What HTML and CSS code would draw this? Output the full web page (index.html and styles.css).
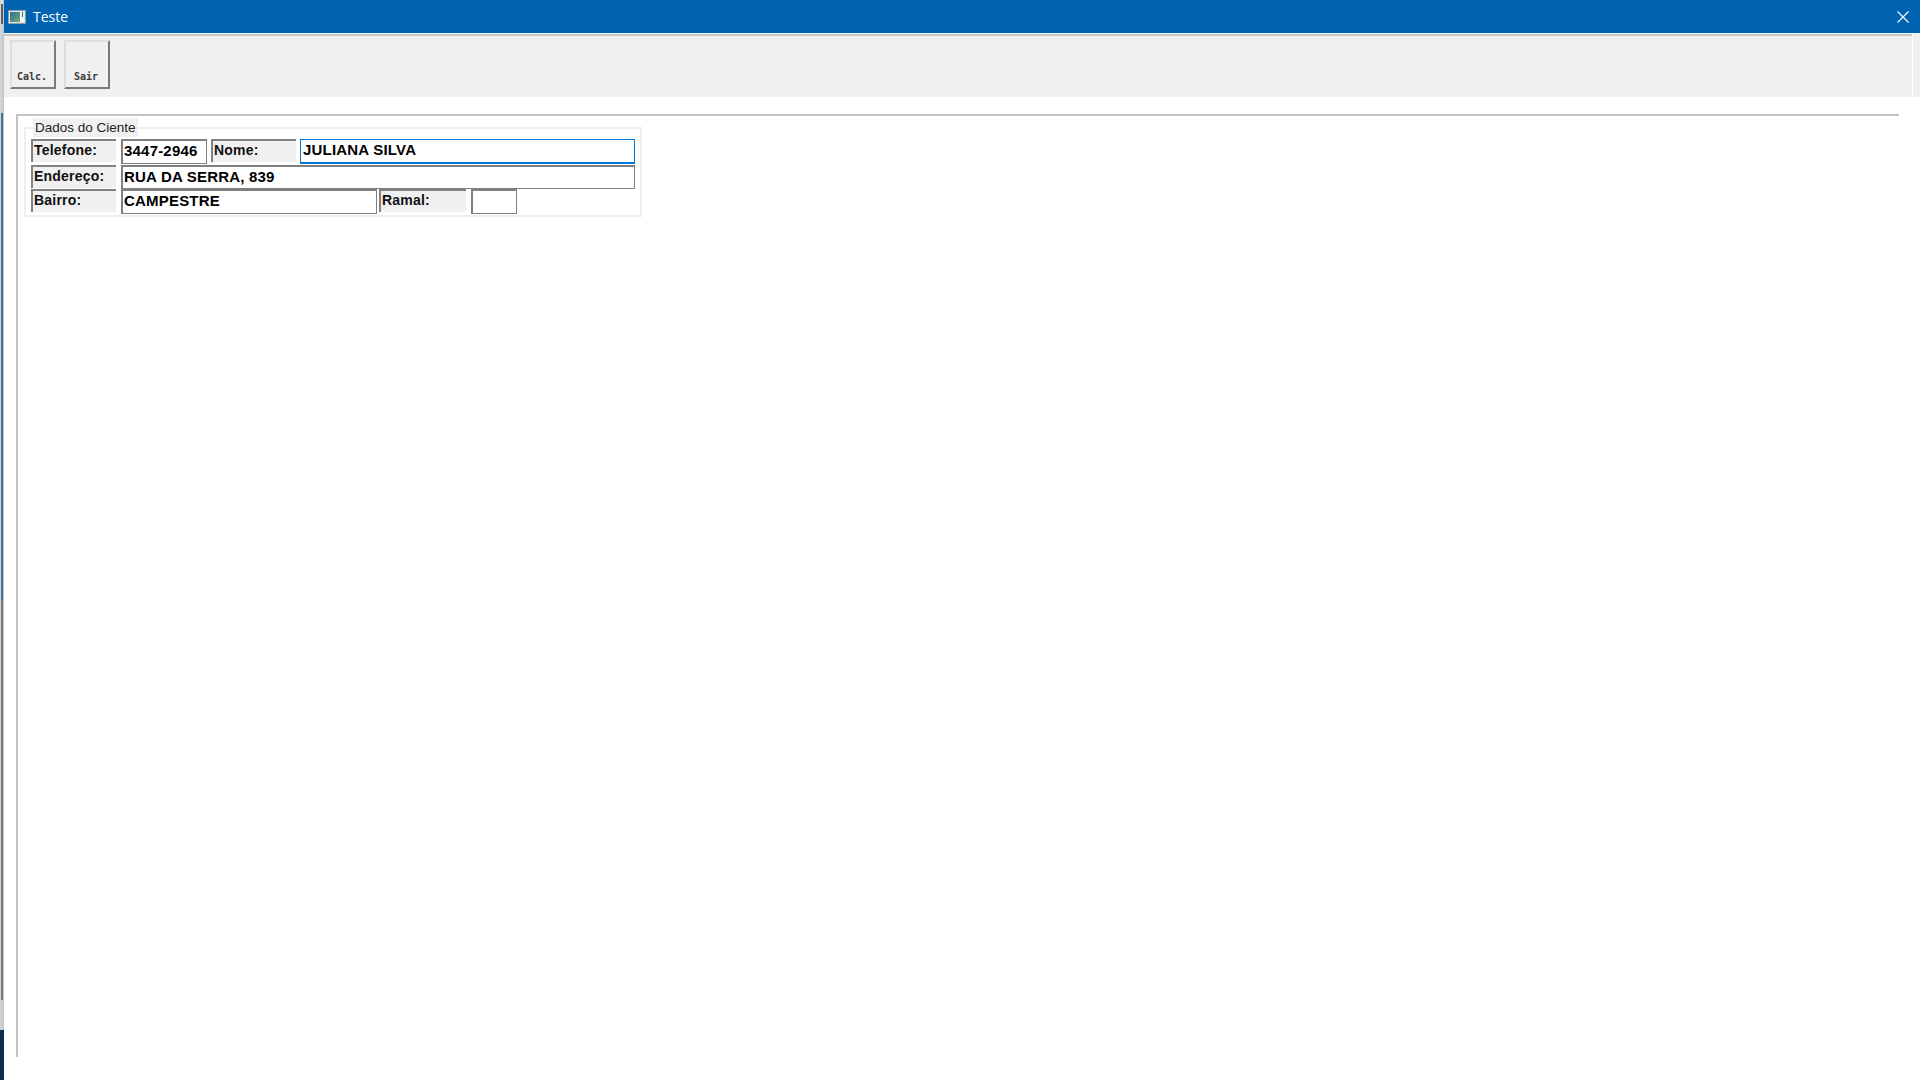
FILE: index.html
```html
<!DOCTYPE html>
<html lang="pt">
<head>
<meta charset="utf-8">
<title>Teste</title>
<link rel="stylesheet" href="styles.css">
</head>
<body>
<div class="desk-strip"></div>
<div class="window">
  <header class="titlebar">
    <svg class="app-icon" width="18" height="14" viewBox="0 0 18 14">
      <defs>
        <linearGradient id="pane" x1="0" y1="0" x2="1" y2="1">
          <stop offset="0" stop-color="#2f6f8f"/>
          <stop offset="1" stop-color="#6fae7a"/>
        </linearGradient>
      </defs>
      <rect x="0.5" y="0.5" width="17" height="13" fill="#dfe6ea" stroke="#8aa0ac"/>
      <rect x="2" y="2" width="10" height="10" fill="url(#pane)"/>
      <rect x="12" y="2" width="4" height="10" fill="#f2f5f6"/>
      <rect x="14" y="2" width="1" height="5" fill="#3c6a84"/>
    </svg>
    <span class="title-text">Teste</span>
    <svg class="close-icon" width="12" height="12" viewBox="0 0 12 12">
      <path d="M0.5 0.5 L11.5 11.5 M11.5 0.5 L0.5 11.5" stroke="#fff" stroke-width="1.1" fill="none"/>
    </svg>
  </header>
  <div class="toolbar-wrap">
    <div class="toolbar">
      <div class="tool-btn">Calc.</div>
      <div class="tool-btn">Sair</div>
    </div>
    <div class="toolbar-edge"></div>
  </div>
  <main class="panel">
    <fieldset class="group">
      <legend class="legend">Dados do Ciente</legend>
      <div class="row">
        <div class="lbl">Telefone:</div>
        <div class="fld fld-tel">3447-2946</div>
        <div class="lbl lbl-gap">Nome:</div>
        <div class="fld fld-focus">JULIANA SILVA</div>
      </div>
      <div class="row row-mid">
        <div class="lbl">Endereço:</div>
        <div class="fld fld-wide">RUA DA SERRA, 839</div>
      </div>
      <div class="row">
        <div class="lbl">Bairro:</div>
        <div class="fld fld-bairro">CAMPESTRE</div>
        <div class="lbl lbl-ramal">Ramal:</div>
        <div class="fld fld-ramal"></div>
      </div>
    </fieldset>
  </main>
</div>
</body>
</html>
```
FILE: styles.css
```css
html, body { margin: 0; padding: 0; height: 100%; background: #fff; overflow: hidden; }
body { display: flex; width: 1920px; height: 1080px; font-family: "Liberation Sans", Arial, sans-serif; }
.desk-strip {
  width: 4px; flex: none;
  background:
    linear-gradient(to bottom, #ffffff00 0, #ffffff00 1030px, #0b2f4f 1030px) 0 0 / 4px 1080px no-repeat,
    linear-gradient(to bottom, #c8c8c8 0, #c8c8c8 1000px, #c9c9c9 1000px) 3px 0 / 1px 1080px no-repeat,
    linear-gradient(to bottom, #dddddd 0, #dddddd 4px, #5c6066 4px, #5c6066 24px, #c5d0d8 24px, #c5d0d8 113px, #3f7296 113px, #3f7296 600px, #777b7f 600px, #777b7f 1000px, #c9c9c9 1000px) 1px 0 / 2px 1080px no-repeat,
    #d4d6d8;
}
.window { flex: 1; display: flex; flex-direction: column; min-width: 0; }
.titlebar { height: 33px; flex: none; background: #0063b1; display: flex; align-items: center; color: #fff; padding: 0 11px 0 4px; box-sizing: border-box; }
.app-icon { flex: none; }
.title-text { margin-left: 7px; font-family: "Open Sans", "Liberation Sans", sans-serif; font-size: 14px; }
.close-icon { margin-left: auto; flex: none; }
.toolbar-wrap { display: flex; flex: none; margin-top: 1px; height: 63px; }
.toolbar { flex: 1; background: #f0f0f0; border-top: 2px solid #c8c8c8; display: flex; gap: 8px; padding: 4px 0 0 6px; box-sizing: border-box; }
.toolbar-edge { width: 7px; flex: none; margin-left: 1px; background: #f0f0f0; }
.tool-btn { width: 46px; height: 49px; box-sizing: border-box; border: 2px solid; border-color: #dedede #7a7a7a #7a7a7a #dedede; font-family: "DejaVu Sans Mono", monospace; font-weight: bold; font-size: 10px; color: #3a3a3a; display: flex; align-items: flex-end; justify-content: center; padding: 0 2px 5px 0; }
.panel { flex: none; margin: 17px 21px 0 12px; height: 943px; border-top: 2px solid #c4c4c4; border-left: 2px solid #c4c4c4; box-sizing: border-box; }
.group { margin: 2px 0 0 6px; padding: 2px 5px 0 5px; width: 618px; height: 99px; box-sizing: border-box; border: 2px solid #eeeeee; }
.legend { margin-left: 2px; padding: 0 2px; background: #f0f0f0; font-size: 13.5px; color: #222; line-height: 19px; }
.row { display: flex; align-items: flex-start; height: 26px; }
.row-mid { height: 24px; }
.lbl { width: 85px; height: 23px; box-sizing: border-box; background: #f0f0f0; border-top: 2px solid #808080; border-left: 2px solid #808080; font-weight: bold; font-size: 14px; letter-spacing: 0.2px; color: #111; padding-left: 1px; line-height: 19px; }
.lbl-gap { margin-left: 4px; }
.lbl-ramal { margin-left: 2px; width: 87px; }
.fld { margin-left: 5px; height: 25px; box-sizing: border-box; background: #fff; border: 1px solid #808080; border-top-width: 2px; border-left-width: 2px; font-weight: bold; font-size: 15px; letter-spacing: 0.2px; color: #000; padding-left: 1px; line-height: 20px; }
.fld-tel { width: 86px; }
.fld-focus { margin-left: 4px; width: 335px; border: 1px solid #0078d7; border-bottom-width: 2px; padding-left: 2px; }
.fld-wide { width: 514px; height: 24px; }
.fld-bairro { width: 256px; }
.fld-ramal { width: 46px; }
```
